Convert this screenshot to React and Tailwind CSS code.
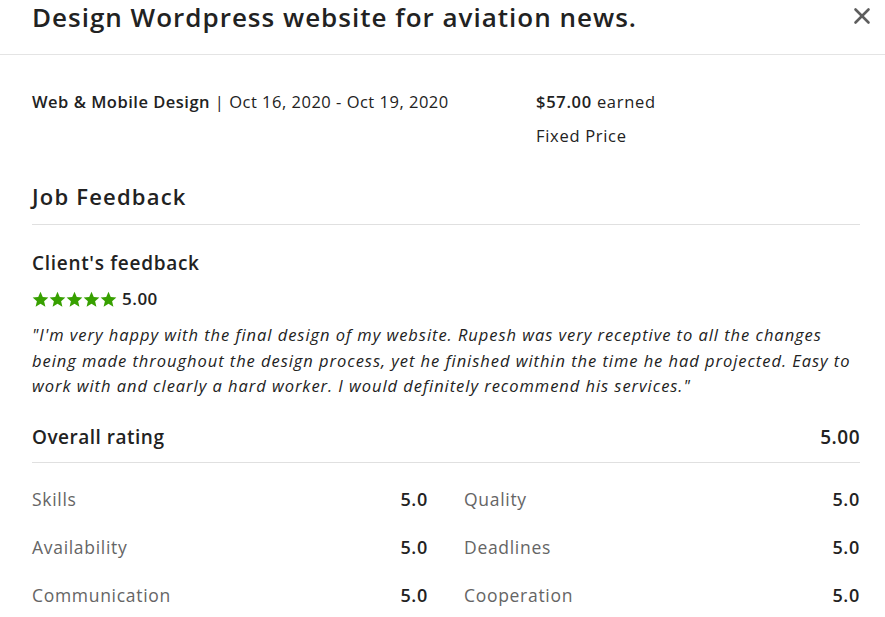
import { X } from "lucide-react";

const font = { fontFamily: '"Open Sans", "Noto Sans", sans-serif' };

function Star() {
  return (
    <svg viewBox="0 0 24 24" className="w-[17px] h-[17px] fill-[#37a000]">
      <path d="M12 1l3.2 7.3 7.9.7-6 5.3 1.8 7.8L12 18l-6.9 4.1 1.8-7.8-6-5.3 7.9-.7z" />
    </svg>
  );
}

const scores = [
  ["Skills", "5.0", "Quality", "5.0"],
  ["Availability", "5.0", "Deadlines", "5.0"],
  ["Communication", "5.0", "Cooperation", "5.0"],
];

export default function App() {
  return (
    <div className="w-[885px] h-[617px] overflow-hidden bg-white text-[#222]" style={font}>
      {/* Header */}
      <div className="flex items-start justify-between pl-8 pr-[10px] h-[55px] border-b border-[#e4e4e4]">
        <h2 className="text-[26px] font-semibold leading-[34px] tracking-[1px]">Design Wordpress website for aviation news.</h2>
        <button className="mt-[3px] text-[#5e5e5e]">
          <X className="size-[26px]" strokeWidth={2.4} />
        </button>
      </div>

      <div className="pl-8 pr-[25px] tracking-[0.5px]">
        {/* Job info */}
        <div className="flex pt-[35px]">
          <div className="w-[504px] text-[16.5px] leading-[24px]">
            <span className="font-semibold">Web &amp; Mobile Design</span> | Oct 16, 2020 - Oct 19, 2020
          </div>
          <div className="text-[16.5px] leading-[24px] tracking-[0.7px]">
            <div><span className="font-semibold">$57.00</span> earned</div>
            <div className="mt-[10px]">Fixed Price</div>
          </div>
        </div>

        {/* Job Feedback */}
        <h3 className="mt-[33px] text-[22px] font-semibold leading-[30px] tracking-[1.2px] pb-[13px] border-b border-[#e0e0e0]">Job Feedback</h3>

        <h4 className="mt-[24px] text-[19px] font-semibold leading-[28px] tracking-[0.7px]">Client's feedback</h4>
        <div className="flex items-center mt-[10px]">
          <Star /><Star /><Star /><Star /><Star />
          <span className="ml-[5px] text-[17px] font-semibold leading-[24px]">5.00</span>
        </div>
        <p className="mt-[11px] italic text-[16.5px] leading-[25.5px] tracking-[0.95px] text-[#222]">
          "I'm very happy with the final design of my website. Rupesh was very receptive to all the changes being made throughout the design process, yet he finished within the time he had projected. Easy to work with and clearly a hard worker. I would definitely recommend his services."
        </p>

        {/* Overall */}
        <div className="mt-[25px] flex justify-between items-center pb-[12px] border-b border-[#e0e0e0] text-[19px] font-semibold leading-[26px] tracking-[0.5px]">
          <span>Overall rating</span>
          <span>5.00</span>
        </div>

        <div className="mt-[13px] grid grid-cols-2 gap-x-[36px]">
          {scores.map(([a, av, b, bv]) => (
            <div key={a} className="contents">
              <div className="flex justify-between items-center h-[48px] text-[17.5px] tracking-[0.7px]">
                <span className="text-[#656565]">{a}</span>
                <span className="font-semibold text-[18px]">{av}</span>
              </div>
              <div className="flex justify-between items-center h-[48px] text-[17.5px] tracking-[0.7px]">
                <span className="text-[#656565]">{b}</span>
                <span className="font-semibold text-[18px]">{bv}</span>
              </div>
            </div>
          ))}
        </div>
      </div>
    </div>
  );
}
